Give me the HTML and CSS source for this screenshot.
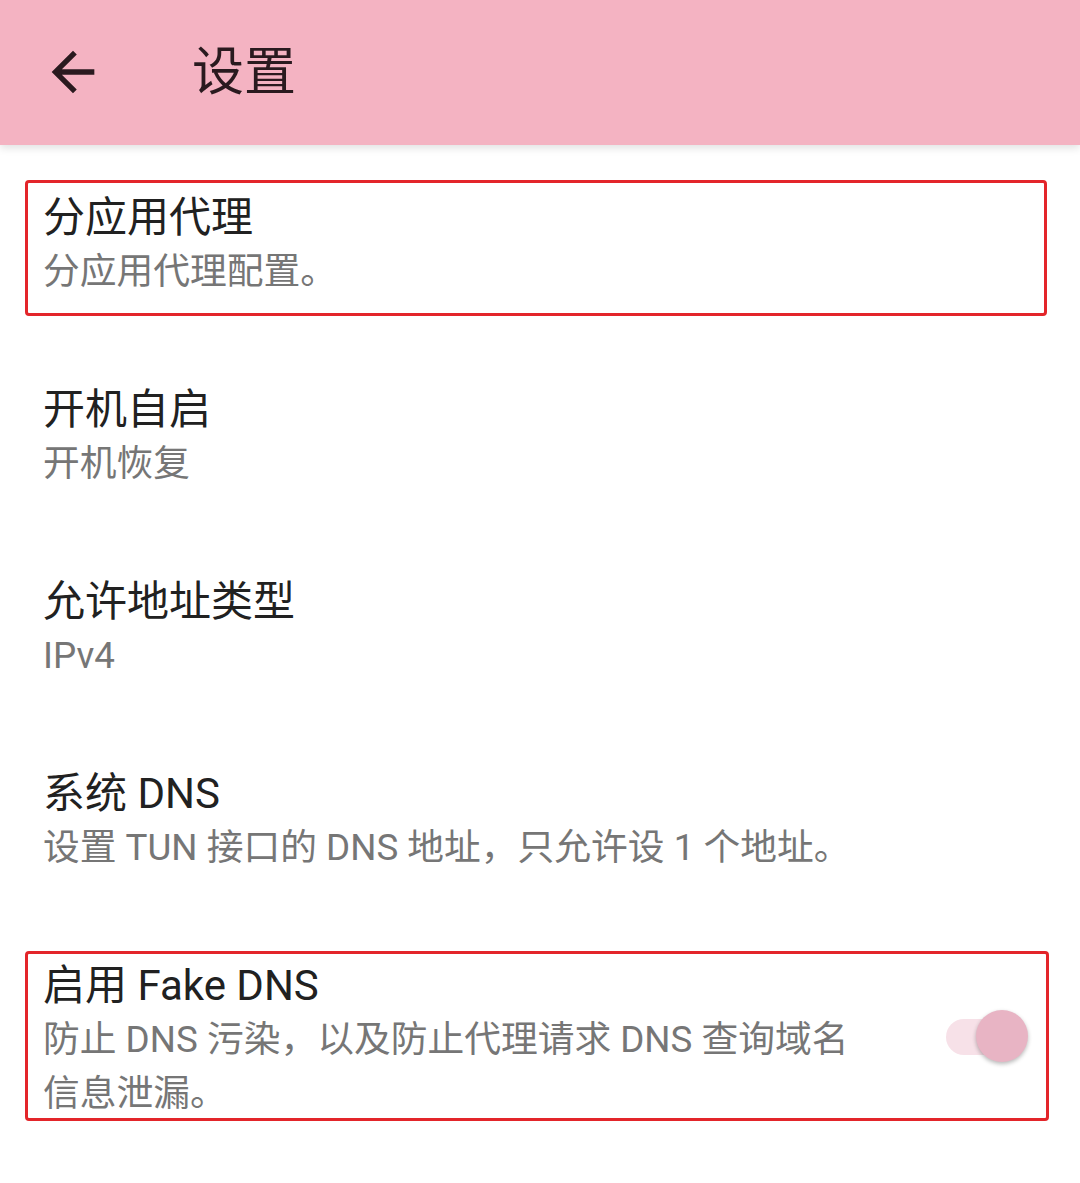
FILE: index.html
```html
<!DOCTYPE html>
<html lang="zh">
<head>
<meta charset="utf-8">
<link rel="stylesheet" href="styles.css">
</head>
<body>
<header class="appbar">
  <svg class="back" viewBox="0 0 24 24" width="64" height="64"><path d="M20 11H7.83l5.59-5.59L12 4l-8 8 8 8 1.41-1.41L7.83 13H20v-2z" fill="#2a1a1f"/></svg>
  <h1 class="title">设置</h1>
</header>
<main class="list">
  <div class="item marked mark-a">
    <div class="text">
      <div class="t">分应用代理</div>
      <div class="s">分应用代理配置。</div>
    </div>
  </div>
  <div class="item">
    <div class="text">
      <div class="t">开机自启</div>
      <div class="s">开机恢复</div>
    </div>
  </div>
  <div class="item">
    <div class="text">
      <div class="t">允许地址类型</div>
      <div class="s">IPv4</div>
    </div>
  </div>
  <div class="item">
    <div class="text">
      <div class="t">系统 DNS</div>
      <div class="s">设置 TUN 接口的 DNS 地址，只允许设 1 个地址。</div>
    </div>
  </div>
  <div class="item marked mark-b">
    <div class="text narrow">
      <div class="t">启用 Fake DNS</div>
      <div class="s">防止 DNS 污染，以及防止代理请求 DNS 查询域名信息泄漏。</div>
    </div>
    <div class="switch"><span class="track"></span><span class="thumb"></span></div>
  </div>
</main>
</body>
</html>
```
FILE: styles.css
```css
html, body {
  margin: 0;
  padding: 0;
  background: #ffffff;
}
body {
  font-family: Roboto, "Noto Sans CJK SC", sans-serif;
  width: 1080px;
  height: 1183px;
  overflow: hidden;
}
.appbar {
  height: 145px;
  background: #f4b3c2;
  display: flex;
  align-items: center;
  box-shadow: 0 3px 8px rgba(0,0,0,0.12);
  position: relative;
  z-index: 1;
}
.back {
  margin-left: 41px;
  margin-top: -2px;
  flex: none;
}
.title {
  margin: 0 0 0 87px;
  font-size: 52px;
  font-weight: 400;
  color: #2a1a1f;
  line-height: 1;
}
.list {
  display: flex;
  flex-direction: column;
}
.item {
  display: flex;
  align-items: center;
  padding: 46px 52px 38px 43px;
  position: relative;
}
.text {
  flex: 1;
  min-width: 0;
}
.text.narrow {
  flex: none;
  width: 827px;
}
.t {
  font-size: 42px;
  line-height: 54px;
  color: #212121;
}
.s {
  font-size: 36.75px;
  line-height: 54px;
  color: #767676;
}
.marked::after {
  content: "";
  position: absolute;
  border: 3px solid #e3252a;
  border-radius: 4px;
  pointer-events: none;
}
.mark-a::after {
  top: 35px;
  left: 25px;
  right: 33px;
  bottom: 21px;
}
.mark-b::after {
  top: 38px;
  left: 25px;
  right: 31px;
  bottom: 38px;
}
.switch {
  margin-left: auto;
  width: 82px;
  height: 54px;
  position: relative;
  flex: none;
  margin-top: -6px;
}
.track {
  position: absolute;
  left: 0;
  top: 9px;
  width: 73px;
  height: 36px;
  border-radius: 18px;
  background: #f7e1e8;
}
.thumb {
  position: absolute;
  right: 0;
  top: 0;
  width: 52px;
  height: 52px;
  border-radius: 50%;
  background: #e8b4c4;
  box-shadow: 0 2px 4px rgba(0,0,0,0.28);
}
```
